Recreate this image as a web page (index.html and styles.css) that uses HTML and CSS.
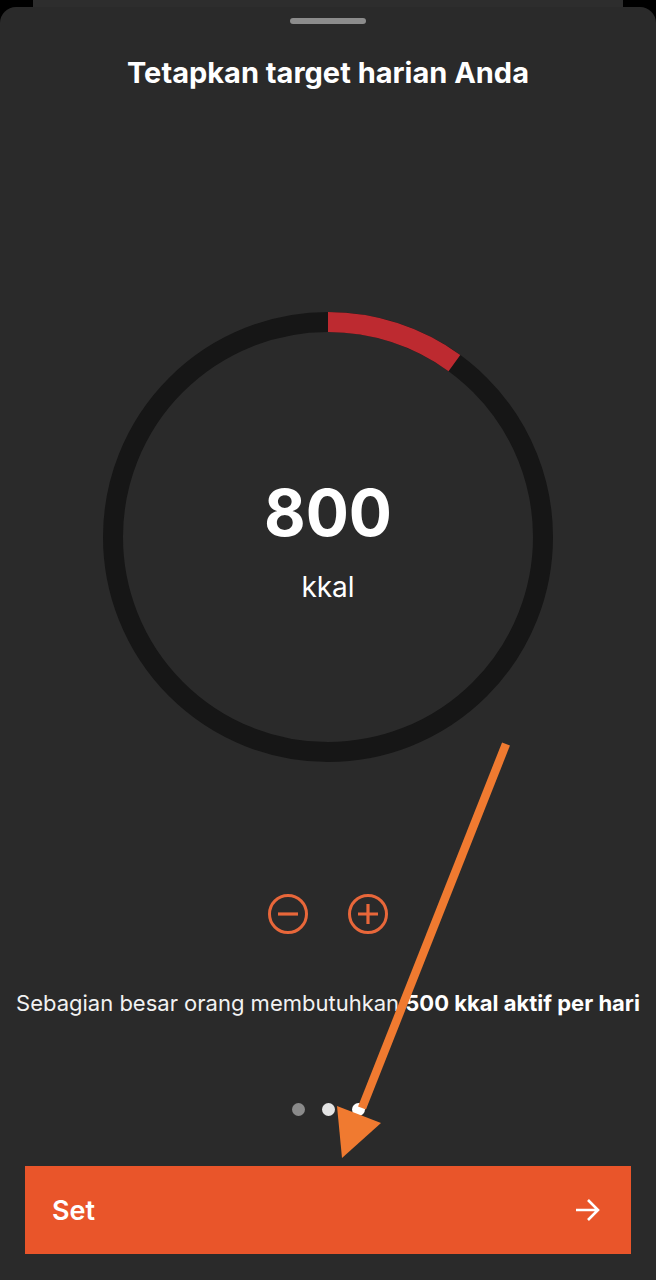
FILE: index.html
```html
<!DOCTYPE html>
<html lang="id">
<head>
<meta charset="utf-8">
<title>Tetapkan target harian Anda</title>
<link rel="stylesheet" href="styles.css">
</head>
<body>
<div class="backcard"></div>
<main class="sheet">
  <div class="handle"></div>
  <h1 class="title">Tetapkan target harian Anda</h1>
  <div class="ring">
    <svg class="ring-svg" viewBox="0 0 450 450" width="450" height="450">
      <circle cx="225" cy="225" r="215" fill="none" stroke="#161616" stroke-width="20"/>
      <circle cx="225" cy="225" r="215" fill="none" stroke="#bd2a30" stroke-width="20"
        stroke-dasharray="135.1 2000" transform="rotate(-90 225 225)"/>
    </svg>
    <div class="ring-label">
      <div class="value">800</div>
      <div class="unit">kkal</div>
    </div>
  </div>
  <div class="controls">
    <button class="circle-btn" aria-label="Kurangi">
      <svg viewBox="0 0 40 40" width="40" height="40"><circle cx="20" cy="20" r="18.5" fill="none" stroke="#e8673a" stroke-width="3"/><path d="M10 20h20" stroke="#e8673a" stroke-width="3.2" stroke-linecap="butt"/></svg>
    </button>
    <button class="circle-btn" aria-label="Tambah">
      <svg viewBox="0 0 40 40" width="40" height="40"><circle cx="20" cy="20" r="18.5" fill="none" stroke="#e8673a" stroke-width="3"/><path d="M10 20h20M20 10v20" stroke="#e8673a" stroke-width="3.2" stroke-linecap="butt"/></svg>
    </button>
  </div>
  <p class="hint">Sebagian besar orang membutuhkan <strong>500 kkal aktif per hari</strong></p>
  <div class="dots">
    <span class="dot dot-dim"></span>
    <span class="dot dot-light"></span>
    <span class="dot dot-white"></span>
  </div>
  <button class="set-btn">
    <span>Set</span>
    <svg viewBox="0 0 26 24" width="26" height="24"><path d="M1 12h22M13 2l10 10-10 10" fill="none" stroke="#fff" stroke-width="2.6" stroke-linejoin="miter"/></svg>
  </button>
</main>
<svg class="annotation" viewBox="0 0 656 1280" width="656" height="1280">
  <path d="M506 744 L362 1108" stroke="#f07a30" stroke-width="8.5" fill="none"/>
  <polygon points="337,1106 381,1123 342,1158" fill="#f07a30"/>
</svg>
</body>
</html>
```
FILE: styles.css
```css
* { box-sizing: border-box; }
html, body {
  margin: 0;
  padding: 0;
  background: #000;
  width: 656px;
  height: 1280px;
  overflow: hidden;
  font-family: Inter, "Noto Sans", sans-serif;
  color: #fff;
}
.backcard {
  height: 7px;
  margin: 0 33px;
  background: #2d2d2d;
}
.sheet {
  position: relative;
  height: 1273px;
  background: #2a2a2a;
  border-radius: 16px 16px 0 0;
  display: flex;
  flex-direction: column;
  align-items: center;
}
.handle {
  width: 76px;
  height: 6px;
  border-radius: 3px;
  background: #8c8c8c;
  margin-top: 11px;
}
.title {
  margin: 32px 0 0;
  font-size: 29px;
  line-height: 34px;
  font-weight: 700;
  color: #fff;
}
.ring {
  margin-top: 222px;
  width: 450px;
  height: 450px;
  display: grid;
}
.ring-svg, .ring-label {
  grid-area: 1 / 1;
}
.ring-svg { display: block; }
.ring-label {
  display: flex;
  flex-direction: column;
  align-items: center;
  justify-content: center;
  padding-top: 10px;
}
.value {
  font-size: 64px;
  line-height: 64px;
  font-weight: 700;
}
.unit {
  margin-top: 26px;
  font-size: 28px;
  line-height: 32px;
  font-weight: 400;
}
.controls {
  margin-top: 132px;
  display: flex;
  gap: 40px;
}
.circle-btn {
  width: 40px;
  height: 40px;
  padding: 0;
  border: 0;
  background: none;
  display: block;
}
.circle-btn svg { display: block; }
.hint {
  margin: 56px 0 0;
  font-size: 22px;
  line-height: 26px;
  color: #f2f2f2;
  white-space: nowrap;
}
.hint strong { font-weight: 700; color: #fff; }
.dots {
  margin-top: 87px;
  display: flex;
  gap: 17px;
}
.dot {
  width: 13px;
  height: 13px;
  border-radius: 50%;
}
.dot-dim { background: #8a8a8a; }
.dot-light { background: #e4e4e4; }
.dot-white { background: #fff; }
.set-btn {
  margin-top: 50px;
  align-self: stretch;
  margin-left: 25px;
  margin-right: 25px;
  height: 88px;
  border: 0;
  background: #e9552a;
  color: #fff;
  display: flex;
  align-items: center;
  justify-content: space-between;
  padding: 0 30px 0 27px;
  font-family: Inter, "Noto Sans", sans-serif;
  font-size: 27px;
  font-weight: 600;
}
.set-btn svg { display: block; }
.annotation {
  position: absolute;
  left: 0;
  top: 0;
  pointer-events: none;
}
```
